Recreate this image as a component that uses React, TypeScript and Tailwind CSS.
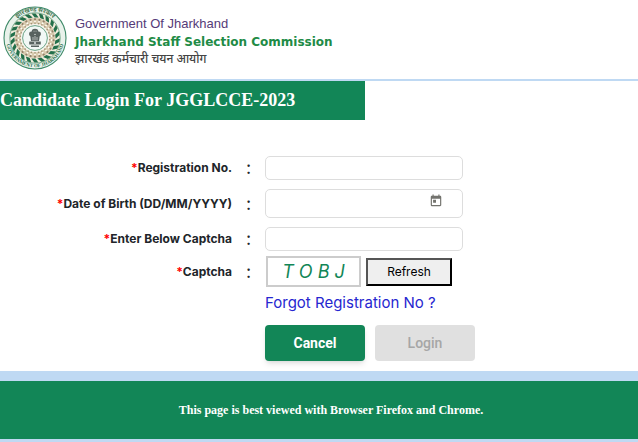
import React from 'react';
import { MdToday } from 'react-icons/md';

const beads = Array.from({ length: 26 }, (_, i) => i * (360 / 26));
const leaves = Array.from({ length: 22 }, (_, i) => i * (360 / 22));

const Seal = () => (
  <svg className="size-16 shrink-0" viewBox="-32 -32 64 64" role="img" aria-label="Government of Jharkhand seal">
    <defs>
      <path id="seal-top" d="M-26.6 0A26.6 26.6 0 0 1 26.6 0" />
      <path id="seal-bottom" d="M-28.2 -8A29.3 29.3 0 1 0 28.2 -8" />
    </defs>
    <circle r="31" fill="#e9f2eb" stroke="#3f8a69" strokeWidth="1.1" />
    <circle r="25.2" fill="#f1ecdc" stroke="#5f9c7a" strokeWidth="0.8" />
    {leaves.map((a) => (
      <path key={a} d="M-3.4 -24.6L0.6 -24.6L3.6 -20.4L-0.4 -20.4Z" transform={`rotate(${a})`} fill="#236f4a" />
    ))}
    <circle r="17.2" fill="#f8f5ed" stroke="#d8caae" strokeWidth="5.4" />
    {beads.map((a) => (
      <g key={a} transform={`rotate(${a})`}>
        <circle cy="-18.7" r="1.1" fill="#93826a" />
        <circle cy="-16.6" r="0.9" fill="#fffdf5" />
        <circle cy="-14.8" r="0.8" fill="#a39172" />
      </g>
    ))}
    <circle r="12.4" fill="#f2f8f5" stroke="#6ba588" strokeWidth="1" />
    <g fill="#58625f">
      <circle cy="-5.8" r="3.4" />
      <circle cx="-3.6" cy="-4" r="2.4" />
      <circle cx="3.6" cy="-4" r="2.4" />
      <path d="M-5 -4h10l-1 7h-8z" />
      <path d="M-5.8 3.4h11.6v3h-11.6zM-4 7.6h8v1.4h-8z" />
    </g>
    <path d="M-1.4 -6.8h0.9M0.6 -6.8h0.9M-1 -3.6h2M-2 -1v3.4M0 -2v4.4M2 -1v3.4" stroke="#dde3e0" strokeWidth="0.7" />
    <circle cy="4.9" r="1" fill="#dde3e0" />
    <text className="font-['Noto_Sans',sans-serif] text-[6px] font-bold" fill="#4c7a58" textAnchor="middle">
      <textPath href="#seal-top" startOffset="50%">झारखण्ड सरकार</textPath>
    </text>
    <text className="font-['Liberation_Serif',serif] text-[5px] font-bold" fill="#276f4d" textAnchor="middle">
      <textPath href="#seal-bottom" startOffset="50%">GOVERNMENT OF JHARKHAND</textPath>
    </text>
  </svg>
);

const Header = () => (
  <header className="flex items-start gap-2 border-b-2 border-[#bfd9f3] px-[3px] pt-[6px] pb-[9px]">
    <Seal />
    <div className="pt-2 font-['Liberation_Sans','Noto_Sans',sans-serif]">
      <p className="text-[13px] leading-5 text-[#553b78]">Government Of Jharkhand</p>
      <h1 className="font-['DejaVu_Sans',sans-serif] text-xs leading-4 font-bold text-[#218b46]">Jharkhand Staff Selection Commission</h1>
      <p className="font-['Noto_Sans',sans-serif] text-xs leading-[18px] font-medium text-[#444444]">झारखंड कर्मचारी चयन आयोग</p>
    </div>
  </header>
);

type FieldProps = {
  label: string;
  id: string;
  children: React.ReactNode;
};

const Field = ({ label, id, children }: FieldProps) => (
  <div className="grid grid-cols-11 items-center">
    <label htmlFor={id} className="col-span-4 text-right text-xs font-bold whitespace-nowrap text-[#212529]">
      <span className="text-[#ff0000]">*</span>{label}
    </label>
    <div className="col-span-7 flex items-center">
      <span className="w-[33px] shrink-0 text-center text-lg leading-5 text-[#212529]">:</span>
      {children}
    </div>
  </div>
);

const inputClass = 'w-[198px] rounded-[5px] border border-[#dddddd] bg-white px-2 text-xs outline-none focus:border-[#128657]';

const LoginForm = () => (
  <form className="flex flex-col pt-9 pb-[10px] font-['Inter',sans-serif]">
    <Field label="Registration No." id="registration">
      <input id="registration" type="text" className={`${inputClass} h-6`} />
    </Field>
    <div className="pt-[9px] pb-[9px]">
      <Field label="Date of Birth (DD/MM/YYYY)" id="dob">
        <div className="relative">
          <input id="dob" type="text" className={`${inputClass} block h-[29px]`} />
          <button type="button" aria-label="Open calendar" className="absolute top-[5px] right-5 text-[#73736e]">
            <MdToday size={14} />
          </button>
        </div>
      </Field>
    </div>
    <Field label="Enter Below Captcha" id="captcha">
      <input id="captcha" type="text" className={`${inputClass} h-6`} />
    </Field>
    <div className="pt-[5px]">
      <Field label="Captcha" id="captcha-code">
        <output id="captcha-code" className="ml-px flex h-[31px] w-[95px] items-center justify-center border-2 border-[#cccccc] text-lg font-normal text-[#128657] italic">
          T O B J
        </output>
        <button type="button" className="ml-[5px] h-7 w-[86px] border-2 border-t-[#555555] border-r-black border-b-black border-l-[#555555] bg-[#efefef] text-xs text-black">
          Refresh
        </button>
      </Field>
    </div>
    <div className="grid grid-cols-11">
      <div className="col-span-7 col-start-5 pl-[33px]">
        <a href="#forgot" className="block pt-1 text-[15px] leading-6 text-[#2626d0]">Forgot Registration No ?</a>
        <div className="flex gap-[10px] pt-[10px] font-['Roboto',sans-serif] text-sm">
          <button type="button" className="h-9 w-[100px] rounded-sm bg-[#128657] font-bold text-white shadow-md">Cancel</button>
          <button type="submit" disabled className="h-9 w-[100px] rounded-sm bg-[#e0e0e0] font-medium text-[#a6a6a6]">Login</button>
        </div>
      </div>
    </div>
  </form>
);

const App = () => (
  <div className="overflow-x-hidden bg-white">
    <Header />
    <main>
      <h2 className="w-4/7 bg-[#128657] py-[9px] font-['Liberation_Serif',serif] text-lg leading-[21px] font-bold whitespace-nowrap text-white">
        Candidate Login For JGGLCCE-2023
      </h2>
      <LoginForm />
    </main>
    <footer className="border-t-[10px] border-b-[3px] border-[#bfd9f3] bg-[#128657] py-[19px] pl-6 text-center font-['Liberation_Serif',serif] text-xs leading-5 font-bold text-white">
      This page is best viewed with Browser Firefox and Chrome.
    </footer>
  </div>
);

export default App;
